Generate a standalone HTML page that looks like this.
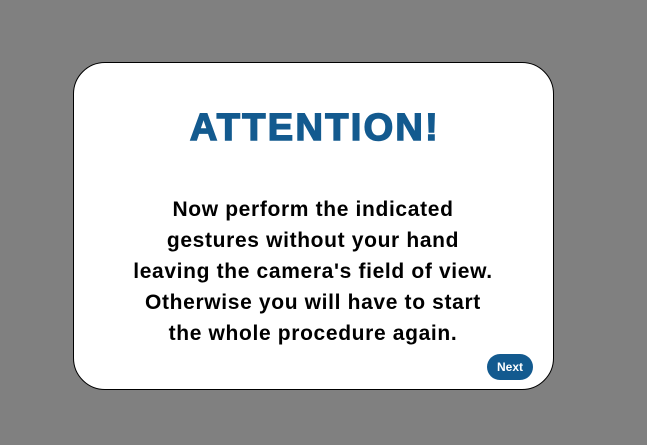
<!DOCTYPE html>
<html><head><style>
html,body{margin:0;padding:0;width:647px;height:445px;background:#808080;overflow:hidden;font-family:"Liberation Sans",sans-serif}
.card{position:absolute;left:73px;top:62px;width:479px;height:326px;background:#fff;border:1px solid #000;border-radius:32px}
h1{position:absolute;left:0;width:626px;top:106px;margin:0;padding-left:2px;text-align:center;font-size:38px;font-weight:900;color:#135a8f;letter-spacing:2.3px;line-height:44px;-webkit-text-stroke:1.5px #135a8f}
.t{position:absolute;left:0;width:626px;top:194px;text-align:center;font-size:21px;letter-spacing:0.65px;font-weight:bold;line-height:31px;color:#000}
.btn{position:absolute;left:487px;top:354px;width:46px;height:26px;border-radius:13px;background:#135a8f;color:#fff;font-size:12px;font-weight:bold;text-align:center;line-height:26px}
</style></head><body>
<div class="card"></div>
<h1>ATTENTION!</h1>
<div class="t">Now perform the indicated<br>gestures without your hand<br>leaving the camera's field of view.<br>Otherwise you will have to start<br>the whole procedure again.</div>
<div class="btn">Next</div>
</body></html>
